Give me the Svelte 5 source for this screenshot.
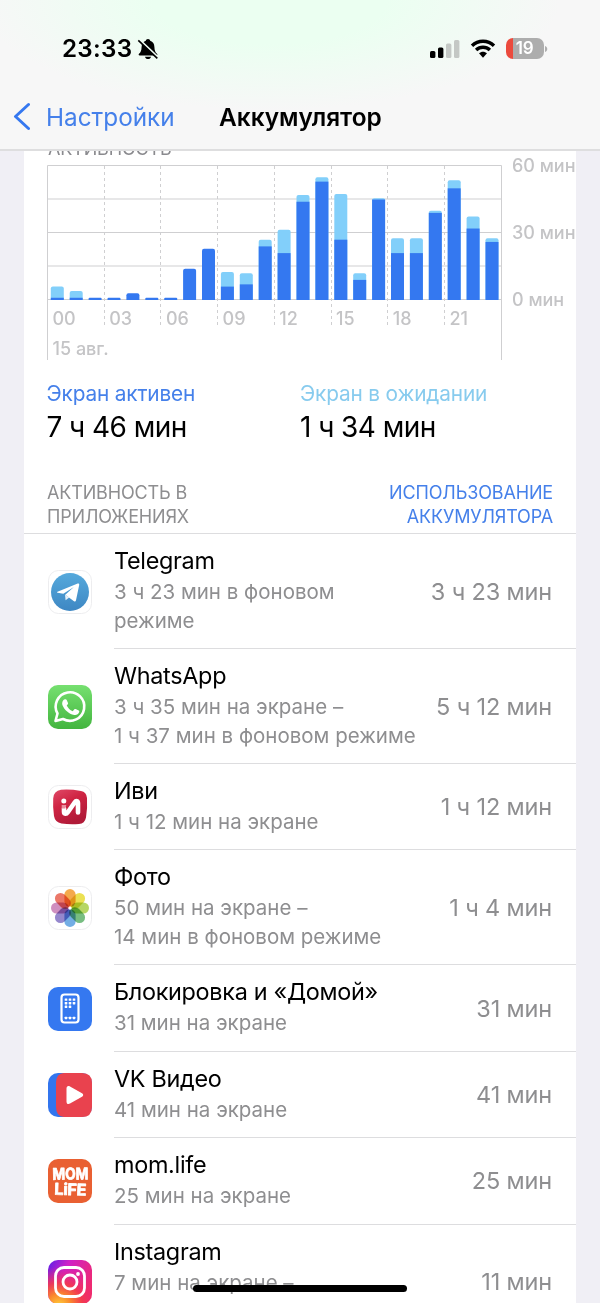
<script>
	// Minutes per hour of the day: [screen on, screen idle]
	const hours = [
		[1, 5], [1, 3], [1, 0], [1, 0], [3, 0], [1, 0],
		[1, 0], [14, 0], [23, 0], [6, 6.5], [7, 5], [24, 3],
		[21, 10.5], [44, 3], [53, 2], [27, 20.5], [9, 3], [45, 0.6],
		[21, 6.6], [21, 6.6], [39, 1], [50, 3.6], [32, 5.4], [26, 1.6]
	];

	const labels = ['00', '03', '06', '09', '12', '15', '18', '21'];

	// Chart geometry
	const LEFT = 24;
	const TOP = 16;
	const BASE = 150;
	const STEP = 18.9;
	const MINUTE = (BASE - TOP) / 60;

	const apps = [
		{ icon: 'telegram', name: 'Telegram', lines: ['3 ч 23 мин в фоновом', 'режиме'], time: '3 ч 23 мин' },
		{ icon: 'whatsapp', name: 'WhatsApp', lines: ['3 ч 35 мин на экране –', '1 ч 37 мин в фоновом режиме'], time: '5 ч 12 мин' },
		{ icon: 'ivi', name: 'Иви', lines: ['1 ч 12 мин на экране'], time: '1 ч 12 мин' },
		{ icon: 'photos', name: 'Фото', lines: ['50 мин на экране –', '14 мин в фоновом режиме'], time: '1 ч 4 мин' },
		{ icon: 'home', name: 'Блокировка и «Домой»', lines: ['31 мин на экране'], time: '31 мин' },
		{ icon: 'vk', name: 'VK Видео', lines: ['41 мин на экране'], time: '41 мин' },
		{ icon: 'mom', name: 'mom.life', lines: ['25 мин на экране'], time: '25 мин' },
		{ icon: 'instagram', name: 'Instagram', lines: ['7 мин на экране –'], time: '11 мин', tall: true }
	];

	const petals = ['#f39a2c', '#e8dc35', '#a9cf48', '#5fb26b', '#5a9fe0', '#8272c4', '#c77bb5', '#e8604f'];
	const dots = [[17, 12], [21, 12], [25, 12], [17, 15.6], [21, 15.6], [25, 15.6], [17, 19.2], [21, 19.2], [17, 30.4], [21, 30.4], [25, 30.4]];
</script>

<div class="screen">
	<header>
		<div class="status">
			<div class="clock">
				<span class="time">23:33</span>
				<svg class="bell" width="22" height="22" viewBox="0 0 22 22">
					<path d="M11 1c-1.300 0-2.100.9-2.200 1.800C6 3.700 4.700 6 4.600 9c-.1 4-1 5.300-2.600 6.800-.7.800-.3 1.700.7 1.700h16.600c1 0 1.400-.9.7-1.700-1.600-1.500-2.500-2.800-2.600-6.800-.1-3-1.400-5.300-4.200-6.200C13.100 1.900 12.300 1 11 1z" />
					<path d="M8 18.700h6c-.3 1.500-1.500 2.300-3 2.300s-2.700-.8-3-2.300z" />
					<path class="gap" d="M2.300 1.500 21.300 19.500" />
					<path class="slash" d="M1.300 2.300 20.300 20.300" />
				</svg>
			</div>
			<div class="indicators">
				<svg width="30" height="20" viewBox="0 0 30 20">
					<rect x="0" y="12" width="5.400" height="7" rx="1.500" />
					<rect x="8" y="8.500" width="5.400" height="10.500" rx="1.500" />
					<rect class="off" x="16" y="4.500" width="5.400" height="14.500" rx="1.500" />
					<rect class="off" x="24" y="1" width="5.400" height="18" rx="1.500" />
				</svg>
				<svg class="wifi" width="26" height="20" viewBox="0 0 26 20">
					<path d="M2 6.700C8.200.8 17.800.8 24 6.700" />
					<path d="M6.100 11c4-3.700 9.800-3.700 13.800 0" />
					<path class="wedge" d="M9 14.300c2.300-2.100 5.700-2.100 8 0L13 18.700z" />
				</svg>
				<div class="battery"><span>19</span></div>
				<svg class="cap" width="3" height="8" viewBox="0 0 3 8"><path d="M0 1c3 .8 3 5.200 0 6z" /></svg>
			</div>
		</div>
		<nav>
			<svg width="20" height="32" viewBox="0 0 20 32"><path d="M18.500 3.500 5.500 15.500l13 12" /></svg>
			<span class="back">Настройки</span>
			<h1>Аккумулятор</h1>
		</nav>
	</header>

	<main>
		<div class="card">
			<div class="caption">АКТИВНОСТЬ</div>
			<svg class="chart" width="552" height="214" viewBox="0 0 552 214">
				{#each [0, 15, 30, 45, 60] as m}
					<path class="grid" d="M{LEFT - 0.5} {BASE - m * MINUTE - 0.5}h454" />
				{/each}
				<path class="grid" d="M23.500 15.500V210M477.500 15.500V210" />
				{#each labels as label, i}
					{#if i > 0}
						<path class="dash" d="M{Math.round(LEFT + i * 3 * STEP) - 0.5} 16V177" />
					{/if}
					<text class="tick" x={28.5 + i * 56.7} y="174.500">{label}</text>
				{/each}
				{#each hours as [on, idle], i}
					{@const x = LEFT + 2.8 + i * STEP}
					{@const top = BASE - (on + idle) * MINUTE}
					{@const r = on + idle < 2 ? 1 : 2}
					<path
						class={idle ? 'idle' : 'on'}
						d="M{x} {BASE}V{top + r}q0 {-r} {r} {-r}h{13 - 2 * r}q{r} 0 {r} {r}V{BASE}z"
					/>
					{#if idle}
						<rect class="on" {x} y={BASE - on * MINUTE} width="13" height={on * MINUTE} />
					{/if}
				{/each}
				<text class="tick" x="28.500" y="205">15 авг.</text>
				<text class="tick" x="488" y="22">60 мин</text>
				<text class="tick" x="488" y="89">30 мин</text>
				<text class="tick" x="488" y="156">0 мин</text>
			</svg>

			<div class="totals">
				<div>
					<div class="label">Экран активен</div>
					<div class="total">7 ч 46 мин</div>
				</div>
				<div>
					<div class="label light">Экран в ожидании</div>
					<div class="total">1 ч 34 мин</div>
				</div>
			</div>

			<div class="heading">
				<div>АКТИВНОСТЬ В<br />ПРИЛОЖЕНИЯХ</div>
				<div class="link">ИСПОЛЬЗОВАНИЕ<br />АККУМУЛЯТОРА</div>
			</div>

			{#each apps as app}
				<div class="row" class:tall={app.tall || app.lines.length > 1}>
					<svg class="icon" width="44" height="44" viewBox="0 0 44 44">
						{#if app.icon === 'telegram'}
							<rect class="plate" x=".5" y=".5" width="43" height="43" rx="10" />
							<linearGradient id="tg" x2="0" y2="1"><stop stop-color="#55a9dc" /><stop offset="1" stop-color="#3e87c3" /></linearGradient>
							<circle cx="22" cy="22" r="19" fill="url(#tg)" />
							<path fill="#fff" d="M9.500 21.700 29.700 13.600c1-.4 1.700.3 1.500 1.400L28 30.300c-.3 1.200-1 1.500-2 .9l-8.700-6.500 8.600-7.700-10.600 6.700-5.600-1c-1-.2-1-.6-.2-1z" />
							<path fill="#e4eff8" d="m17 24.500.6 5.700 3.600-2.600z" />
						{:else if app.icon === 'whatsapp'}
							<linearGradient id="wa" x2="0" y2="1"><stop stop-color="#76e070" /><stop offset="1" stop-color="#43b53f" /></linearGradient>
							<rect width="44" height="44" rx="10" fill="url(#wa)" />
							<path class="line" stroke-width="2.600" d="m7.500 36 2-7.500a14.300 14.300 0 1 1 5.500 5.500z" />
							<path fill="#fff" d="M17 14.300c.8-.2 1.300 0 1.700.8l1.300 3c.3.7-.2 1.300-1.300 2.500 1.400 2.700 3.200 4.500 6 5.700l1.700-2c.4-.5.800-.5 1.300-.3l3 1.500c.7.4.7.8.5 1.600-.6 2.200-2.900 3.300-5 2.900-5.600-1.100-10-5.500-11.700-9.800-.8-2.200.2-5.400 2.500-5.900z" />
						{:else if app.icon === 'ivi'}
							<rect class="plate" x=".5" y=".5" width="43" height="43" rx="10" />
							<linearGradient id="iv" x2=".5" y2="1"><stop stop-color="#e04a68" /><stop offset=".45" stop-color="#cf2443" /><stop offset="1" stop-color="#b01a38" /></linearGradient>
							<path fill="url(#iv)" d="M13 4.800Q22 4 33 6q5.500 1 6 7 .6 10-1 19.500-1.200 6-7 6.500-9 .8-17.500-.5-6.500-1.200-7.500-7.500-1.300-9-.8-17.500.5-7.800 7.800-8.700z" />
							<circle cx="15.800" cy="16" r="2.500" fill="#fff" />
							<path class="line" stroke-width="4.600" d="M16 23.500v3.300c0 2.400 2.300 2.600 3.800.4l7-10c1.300-1.800 3.200-1.200 3.200 1v9.300" />
							<path d="M13.700 20h4.600l-1 3.400h-3.600z" fill="#ea8fa0" />
						{:else if app.icon === 'photos'}
							<rect class="plate" x=".5" y=".5" width="43" height="43" rx="10" />
							<g class="petals">
								{#each petals as fill, i}
									<rect x="16.400" y="3" width="11.200" height="17.800" rx="5.600" {fill} transform="rotate({i * 45} 22 22)" />
								{/each}
							</g>
							<circle cx="22" cy="22" r="1.600" fill="#fff" />
						{:else if app.icon === 'home'}
							<rect width="44" height="44" rx="10" fill="#3578f0" />
							<rect class="line" x="13.500" y="7.500" width="17" height="28" rx="3" stroke-width="2.200" />
							{#each dots as [x, y]}
								<rect {x} {y} width="2.600" height="2.400" rx=".4" fill="#fff" transform="translate(-.3 -.6)" />
							{/each}
						{:else if app.icon === 'vk'}
							<rect width="44" height="44" rx="10" fill="#3275ee" />
							<path fill="#e9424e" d="M16 0h18q10 0 10 10v24q0 10-10 10H16q-8-.5-8-10V10Q8 .5 16 0z" />
							<path fill="#fff" d="M18.500 15.500c0-2.300 1.500-3.200 3.500-2.100l12 6.800c1.600.9 1.600 2.700 0 3.600l-12 6.800c-2 1.100-3.500.2-3.500-2.100z" />
						{:else if app.icon === 'mom'}
							<rect width="44" height="44" rx="10" fill="#e96032" />
							<text class="mark" x="22.500" y="20.500" textLength="36" lengthAdjust="spacingAndGlyphs" transform="rotate(-1 22 16)">MOM</text>
							<text class="mark" x="22.500" y="36" textLength="32" transform="rotate(2 22 30)">LiFE</text>
						{:else}
							<linearGradient id="ig" x2="1" y2=".5"><stop stop-color="#5a20e8" /><stop offset=".4" stop-color="#cf20c8" /><stop offset="1" stop-color="#ee2a72" /></linearGradient>
							<radialGradient id="ig2" cx=".25" cy="1.050" r=".9"><stop stop-color="#ffd33c" /><stop offset=".3" stop-color="#fb8a2c" /><stop offset=".6" stop-color="#f43c48" stop-opacity=".85" /><stop offset="1" stop-color="#ef2a70" stop-opacity="0" /></radialGradient>
							<rect width="44" height="44" rx="10" fill="url(#ig)" />
							<rect width="44" height="44" rx="10" fill="url(#ig2)" />
							<rect class="line" x="7.500" y="7.500" width="29" height="29" rx="8.500" stroke-width="2.800" />
							<circle class="line" cx="22" cy="22" r="7" stroke-width="2.800" />
							<circle cx="30" cy="14" r="1.900" fill="#fff" />
						{/if}
					</svg>
					<div class="body">
						<div class="info">
							<div class="name">{app.name}</div>
							{#each app.lines as line}
								<div class="detail">{line}</div>
							{/each}
						</div>
						<div class="spent">{app.time}</div>
					</div>
				</div>
			{/each}
		</div>
	</main>

	<div class="home-bar"></div>
</div>

<style>
	:global(body) {
		margin: 0;
		overflow: hidden;
	}

	.screen {
		position: relative;
		display: flex;
		flex-direction: column;
		width: 600px;
		height: 1303px;
		overflow: hidden;
		background: #f0eff5;
		font-family: Inter, 'Liberation Sans', sans-serif;
		color: #000;
		white-space: nowrap;
	}

	header {
		box-sizing: border-box;
		flex: none;
		height: 151px;
		border-bottom: 2px solid #dededf;
		background: radial-gradient(ellipse 290px 110px at 270px 0, #ebfff1 40%, #f7f7f7 100%) #f7f7f7;
	}

	.status {
		display: flex;
		justify-content: space-between;
		align-items: center;
		height: 84px;
		padding: 13px 52px 0 62px;
		box-sizing: border-box;
	}

	.clock,
	.indicators {
		display: flex;
		align-items: center;
	}

	.time {
		font-size: 24.2px;
		font-weight: 600;
		letter-spacing: 0.3px;
	}

	.bell {
		margin-left: 5px;
	}

	.bell .gap,
	.bell .slash {
		fill: none;
		stroke: #f0fcf3;
		stroke-width: 2;
	}

	.bell .slash {
		stroke: #000;
		stroke-width: 1.6;
	}

	.off {
		fill: #c4c8c5;
	}

	.wifi {
		margin: 0 10px 0 10px;
	}

	.wifi path {
		fill: none;
		stroke: #000;
		stroke-width: 3.4;
	}

	.wifi .wedge {
		fill: #000;
		stroke: none;
	}

	.battery {
		width: 38px;
		height: 21px;
		border-radius: 7px;
		background: linear-gradient(to right, #eb4a3d 7.500px, #adadad 7.500px);
		color: #fff;
		font-size: 17px;
		font-weight: 600;
		line-height: 21px;
		text-align: center;
		letter-spacing: -0.3px;
	}

	.battery span {
		margin-right: 1px;
	}

	.cap {
		margin-left: 1px;
		fill: #adadad;
	}

	nav {
		display: flex;
		align-items: center;
		height: 66px;
		padding-left: 10px;
	}

	nav path {
		fill: none;
		stroke: #3578f0;
		stroke-width: 3;
		stroke-linecap: round;
		stroke-linejoin: round;
	}

	.back {
		width: 173px;
		margin-left: 16px;
		color: #4580ea;
		font-size: 24.3px;
	}

	h1 {
		margin: 0;
		font-size: 24.4px;
		font-weight: 600;
	}

	main {
		flex: 1;
		overflow: hidden;
		padding: 0 24px;
	}

	.card {
		height: 1300px;
		background: #fff;
	}

	.caption {
		height: 12px;
		margin-top: -13px;
		padding-left: 24px;
		color: #8a8a8e;
		font-size: 18px;
		line-height: 22px;
		letter-spacing: -0.15px;
	}

	.chart {
		display: block;
	}

	.grid,
	.dash {
		fill: none;
		stroke: #cfcfd1;
	}

	.dash {
		stroke-dasharray: 3 3;
	}

	.on {
		fill: #3478f0;
	}

	.idle {
		fill: #82cffa;
	}

	.tick {
		fill: #c4c4c6;
		font-size: 18px;
		font-weight: 500;
	}

	.totals {
		display: grid;
		grid-template-columns: 253.5px 1fr;
		padding: 16px 0 0 22.5px;
	}

	.label {
		color: #4580ea;
		font-size: 20.8px;
		line-height: 28px;
		letter-spacing: -0.15px;
	}

	.label.light {
		color: #87cbee;
	}

	.total {
		font-size: 28px;
		line-height: 38px;
		letter-spacing: -0.55px;
	}

	.heading {
		display: flex;
		justify-content: space-between;
		height: 52px;
		margin-top: 35px;
		padding: 0 23px;
		border-bottom: 1px solid #dddddf;
		color: #8e8e90;
		font-size: 18px;
		line-height: 24px;
		letter-spacing: -0.15px;
	}

	.link {
		color: #4580ea;
		text-align: right;
	}

	.row {
		display: flex;
		align-items: center;
		height: 86.4px;
		padding-left: 23.5px;
	}

	.row.tall {
		height: 115px;
	}

	.icon {
		flex: none;
	}

	.plate {
		fill: #fff;
		stroke: #ededef;
	}

	.line {
		fill: none;
		stroke: #fff;
		stroke-linecap: round;
		stroke-linejoin: round;
	}

	.petals rect {
		mix-blend-mode: multiply;
		opacity: 0.85;
	}

	.mark {
		fill: #fff;
		stroke: #fff;
		stroke-width: 0.8;
		stroke-linejoin: round;
		font-size: 16px;
		font-weight: 700;
		text-anchor: middle;
	}

	.body {
		box-sizing: border-box;
		display: flex;
		flex: 1;
		justify-content: space-between;
		height: 100%;
		margin-left: 22.5px;
		padding-right: 24px;
		border-bottom: 1px solid #dddddf;
	}

	.info {
		padding-top: 10px;
	}

	.name {
		font-size: 23.4px;
		line-height: 34px;
		letter-spacing: -0.3px;
	}

	.detail {
		color: #8e8e90;
		font-size: 20.5px;
		line-height: 28.5px;
	}

	.spent {
		align-self: center;
		color: #8e8e90;
		font-size: 23.5px;
		letter-spacing: -0.15px;
	}

	.home-bar {
		position: absolute;
		left: 193px;
		bottom: 11px;
		width: 214px;
		height: 7px;
		border-radius: 4px;
		background: #000;
	}
</style>
